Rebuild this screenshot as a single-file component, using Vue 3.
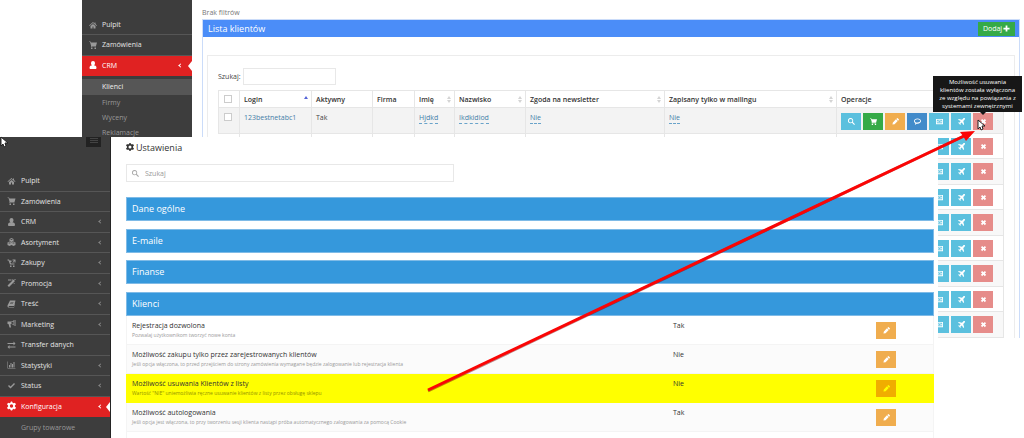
<script setup>
import { ref } from 'vue'

const icons = {
  home: 'M8 2 0 9l1 1 7-6 7 6 1-1-3-3V3h-2v2zM3 10v5h4v-4h2v4h4v-5L8 6z',
  cart: 'M0 1h3l1 2h12l-2 7H5v1h9v1H4V9L2 2H0zM4 13h3v3H4zM11 13h3v3h-3z',
  user: 'M8 0a4 4 0 0 1 4 4c0 2-1 4-2 5 3 0 5 1 5 5 0 1-1 2-2 2H3c-1 0-2-1-2-2 0-4 2-5 5-5-1-1-2-3-2-5a4 4 0 0 1 4-4z',
  cubes: 'M8 0l4 2v4l-4 2-4-2V2zM4 7l4 2v5l-4 2-4-2V9zM12 7l4 2v5l-4 2-4-2V9zM5 3l3 1 3-1-3-1zM1 10l3 1 3-1-3-1zM9 10l3 1 3-1-3-1z',
  basket: 'M0 1h3l1 2h4v3H6l1 3h7v2H5L2 3H0zM10 1h6v6h-2V4l-3 4-1-1 3-4h-3zM5 13h3v3H5zM11 13h3v3h-3z',
  wand: 'M12 1l3 3L3 16l-3-3zM1 1h7v2H1zM12 8h3v1h-3zM14 0h2v2h-2zM9 0h1v3H9z',
  book: 'M5 1h11l-3 11H3c-1 0-1 2 0 2h10l2-8v3l-2 6H2c-2 0-2-2-2-4zM6 4v1h6V4zM5 7v1h6V7z',
  horn: 'M0 3h6c3 0 5-1 7-3v11c-2-2-4-3-7-3l1 7H4L2 8H0zM12 3c-2 1-4 2-5 2v2c2 0 4 1 5 2zM14 0h2v12h-2z',
  swap: 'M0 4h12V1l4 4-4 4V6H0zM16 11H4V8l-4 4 4 4v-3h12z',
  chart: 'M0 1h1v13h15v1H0zM3 8h2v5H3zM6 4h2v9H6zM9 6h2v7H9zM12 2h2v11h-2z',
  check: 'M1 8l2-2 3 3 7-7 2 2-9 9z',
  gear: 'M7 0h2l1 2 2 1 2-1 2 3-2 2v2l2 2-2 3-2-1-2 1-1 2H7l-1-2-2-1-2 1-2-3 2-2V7L0 5l2-3 2 1 2-1zM8 5a3 3 0 1 0 0 6 3 3 0 0 0 0-6z',
  search: 'M6 0a6 6 0 0 1 5 9l5 5-2 2-5-5a6 6 0 1 1-3-11zM6 2a4 4 0 1 0 0 8 4 4 0 0 0 0-8z',
  pencil: 'M1 15l1-5 7-7 4 4-7 7zM10 2l2-2c1 0 4 3 4 4l-2 2z',
  chat: 'M8 1c5 0 8 3 8 6s-3 6-8 6H6l-4 3 1-4C1 11 0 9 0 7c0-3 3-6 8-6zM8 3C4 3 2 5 2 7c0 1 1 3 3 3v1l1-1h2c4 0 6-1 6-3S12 3 8 3z',
  money: 'M0 2h16v12H0zM2 4v8h12V4zM6 5h4v6H6zM3 6h2v4H3zM11 6h2v4h-2zM7 6v4h2V6z',
  plane: 'M15 0c2 1 1 3-1 5l-2 2 2 7-2 2-3-6-3 2v3l-1 1-2-3-3-2 1-1h3l2-3-6-3 2-2 7 2 2-2c2-2 3-3 4-2z',
  cross: 'M2 5l3-3 3 3 3-3 3 3-3 3 3 3-3 3-3-3-3 3-3-3 3-3z',
  plus: 'M6 1h4v5h5v4h-5v5H6v-5H1V6h5z',
}

const backMenu = [
  { label: 'Pulpit', icon: 'home' },
  { label: 'Zamówienia', icon: 'cart' },
  { label: 'CRM', icon: 'user', active: true, sub: true },
]
const backSub = ['Klienci', 'Firmy', 'Wyceny', 'Reklamacje']
const frontMenu = [
  { label: 'Pulpit', icon: 'home' },
  { label: 'Zamówienia', icon: 'cart' },
  { label: 'CRM', icon: 'user', sub: true },
  { label: 'Asortyment', icon: 'cubes', sub: true },
  { label: 'Zakupy', icon: 'basket', sub: true },
  { label: 'Promocja', icon: 'wand', sub: true },
  { label: 'Treść', icon: 'book', sub: true },
  { label: 'Marketing', icon: 'horn', sub: true },
  { label: 'Transfer danych', icon: 'swap' },
  { label: 'Statystyki', icon: 'chart', sub: true },
  { label: 'Status', icon: 'check', sub: true },
  { label: 'Konfiguracja', icon: 'gear', active: true, sub: true },
]
const operations = [
  { icon: 'search', tone: 'cyan', label: 'Podgląd' },
  { icon: 'cart', tone: 'green', label: 'Zamówienie' },
  { icon: 'pencil', tone: 'orange', label: 'Edytuj' },
  { icon: 'chat', tone: 'blue', label: 'Wiadomość' },
  { icon: 'money', tone: 'cyan', label: 'Płatności' },
  { icon: 'plane', tone: 'cyan', label: 'Wyślij' },
  { icon: 'cross', tone: 'red', label: 'Usuń' },
]
const sections = ['Dane ogólne', 'E-maile', 'Finanse', 'Klienci']
const settings = [
  { name: 'Rejestracja dozwolona', hint: 'Pozwalaj użytkownikom tworzyć nowe konta', value: 'Tak' },
  { name: 'Możliwość zakupu tylko przez zarejestrowanych klientów', hint: 'Jeśli opcja włączona, to przed przejściem do strony zamówienia wymagane będzie zalogowanie lub rejestracja klienta', value: 'Nie' },
  { name: 'Możliwość usuwania Klientów z listy', hint: 'Wartość "NIE" uniemożliwia ręczne usuwanie klientów z listy przez obsługę sklepu', value: 'Nie', marked: true },
  { name: 'Możliwość autologowania', hint: 'Jeśli opcja jest włączona, to przy tworzeniu sesji klienta nastąpi próba automatycznego zalogowania za pomocą Cookie', value: 'Tak' },
  { name: '', hint: '', value: '' },
]
const clientQuery = ref('')
const settingQuery = ref('')
</script>

<template>
  <div class="desktop">
    <section class="window back">
      <nav class="sidebar">
        <ul class="menu">
          <li v-for="m in backMenu" :key="m.label" :class="{ active: m.active }">
            <a href="#"><svg class="icon" viewBox="0 0 16 16"><path fill-rule="evenodd" :d="icons[m.icon]" /></svg>{{ m.label }}<span v-if="m.sub" class="chevron"></span></a>
          </li>
        </ul>
        <ul class="submenu">
          <li v-for="(s, i) in backSub" :key="s" :class="{ current: i === 0 }"><a href="#">{{ s }}</a></li>
        </ul>
      </nav>
      <main class="clients">
        <p class="filters">Brak filtrów</p>
        <div class="panel">
          <header class="panel-head">
            <h2>Lista klientów</h2>
            <button class="add">Dodaj <svg class="icon" viewBox="0 0 16 16"><path :d="icons.plus" /></svg></button>
          </header>
          <div class="card">
            <div class="search"><label for="client-search">Szukaj:</label><input id="client-search" v-model="clientQuery" type="text"></div>
            <table>
              <colgroup>
                <col class="c-check"><col class="c-login"><col class="c-active"><col class="c-firm"><col class="c-name"><col class="c-surname"><col class="c-news"><col><col class="c-ops">
              </colgroup>
              <thead>
                <tr>
                  <th><input type="checkbox" aria-label="Zaznacz wszystkie"></th>
                  <th>Login<i class="sort asc"></i></th>
                  <th>Aktywny</th>
                  <th>Firma</th>
                  <th>Imię<i class="sort"></i></th>
                  <th>Nazwisko<i class="sort"></i></th>
                  <th>Zgoda na newsletter<i class="sort"></i></th>
                  <th>Zapisany tylko w mailingu<i class="sort"></i></th>
                  <th>Operacje</th>
                </tr>
              </thead>
              <tbody>
                <tr v-for="n in 9" :key="n">
                  <td><input v-if="n === 1" type="checkbox" aria-label="Zaznacz klienta"></td>
                  <td><a v-if="n === 1" href="#">123bestnetabc1</a></td>
                  <td><span v-if="n === 1">Tak</span></td>
                  <td></td>
                  <td><a v-if="n === 1" href="#" class="editable">Hjdkd</a></td>
                  <td><a v-if="n === 1" href="#" class="editable">Ikdkidiod</a></td>
                  <td><a v-if="n === 1" href="#" class="editable">Nie</a></td>
                  <td><a v-if="n === 1" href="#" class="editable">Nie</a></td>
                  <td>
                    <div class="ops">
                      <button v-for="o in operations" :key="o.icon" :class="['square', o.tone]" :aria-label="o.label"><svg class="icon" viewBox="0 0 16 16"><path fill-rule="evenodd" :d="icons[o.icon]" /></svg></button>
                    </div>
                  </td>
                </tr>
              </tbody>
            </table>
          </div>
        </div>
      </main>
      <div class="tooltip" role="tooltip">Możliwość usuwania<br>klientów została wyłączona<br>ze względu na powiązania z<br>systemami zewnętrznymi</div>
    </section>

    <section class="window front">
      <nav class="sidebar">
        <button class="toggle" aria-label="Menu"><i></i><i></i><i></i></button>
        <ul class="menu">
          <li v-for="m in frontMenu" :key="m.label" :class="{ active: m.active }">
            <a href="#"><svg class="icon" viewBox="0 0 16 16"><path fill-rule="evenodd" :d="icons[m.icon]" /></svg>{{ m.label }}<span v-if="m.sub" class="chevron"></span></a>
          </li>
        </ul>
        <ul class="submenu"><li><a href="#">Grupy towarowe</a></li></ul>
      </nav>
      <main class="config">
        <h1><svg class="icon" viewBox="0 0 16 16"><path fill-rule="evenodd" :d="icons.gear" /></svg>Ustawienia</h1>
        <div class="find">
          <svg class="icon" viewBox="0 0 16 16"><path fill-rule="evenodd" :d="icons.search" /></svg>
          <input v-model="settingQuery" type="text" placeholder="Szukaj" aria-label="Szukaj">
        </div>
        <div class="sections">
          <h2 v-for="s in sections" :key="s" class="section">{{ s }}</h2>
        </div>
        <div class="settings">
          <div v-for="(s, i) in settings" :key="i" :class="['setting', { marked: s.marked }]">
            <div class="what"><strong>{{ s.name }}</strong><small>{{ s.hint }}</small></div>
            <span class="value">{{ s.value }}</span>
            <button class="square orange" aria-label="Edytuj"><svg class="icon" viewBox="0 0 16 16"><path :d="icons.pencil" /></svg></button>
          </div>
        </div>
      </main>
    </section>

    <svg class="arrow" viewBox="0 0 560 280">
      <path d="M1 270 537 15" stroke="#6b0000" stroke-opacity=".45" stroke-width="3" />
      <path d="M1 269 537 15" stroke="#fb0505" stroke-width="3" />
      <path d="M548 10 533 11 536 15 539 20z" fill="#fb0505" />
    </svg>
    <svg class="pointer hover" viewBox="0 0 8 12"><path d="M1 1v9l2-2 1 3 2-1-1-3h3z" fill="#fff" stroke="#222" stroke-width="1" /></svg>
    <svg class="pointer idle" viewBox="0 0 8 12"><path d="M1 1v9l2-2 1 3 2-1-1-3h3z" fill="#fff" stroke="#222" stroke-width="1" /></svg>
  </div>
</template>

<style>
body { margin: 0; background: #fff; }
</style>

<style scoped>
.desktop { position: relative; height: 100vh; min-height: 438px; overflow: hidden; font-family: "Open Sans", "Noto Sans", sans-serif; font-size: 7px; color: #444; }
.desktop * { box-sizing: border-box; }
ul, p, h1, h2 { margin: 0; padding: 0; font-weight: 400; list-style: none; }
a { color: inherit; text-decoration: none; }
button, input { font: inherit; margin: 0; padding: 0; border: 0; border-radius: 0; }
.icon { width: 8px; height: 8px; fill: currentColor; flex: none; }
.window { position: absolute; display: flex; background: #fff; overflow: hidden; }
.back { top: 0; left: 82px; right: 0; height: 338px; }
.front { top: 137px; left: 0; right: 86px; bottom: 0; }

.sidebar { flex: none; background: #3d3d3d; color: #e4e4e4; }
.back .sidebar { width: 110px; padding-top: 15px; }
.front .sidebar { width: 111px; display: flex; flex-direction: column; border-right: 1px solid #242424; }
.menu { display: flex; flex-direction: column; }
.back .menu { height: 61px; }
.front .menu { height: 246px; flex: none; margin-top: 24px; }
.menu li { flex: 1; border-bottom: 1px solid #565656; }
.menu a { position: relative; display: flex; align-items: center; gap: 5px; height: 100%; padding-left: 7px; }
.menu .icon { color: #999; }
.menu .active { background: #e02222; border-color: #e02222; color: #fff; }
.menu .active .icon { color: #fff; }
.front .menu .icon { width: 9px; }
.front .menu .active .icon { height: 10px; }
.chevron { width: 3px; height: 3px; margin: 0 10px 0 auto; border-left: 1px solid #888; border-bottom: 1px solid #888; transform: rotate(45deg); }
.front .chevron { margin-right: 8px; }
.active .chevron { border-color: #fff; }
.active a::after { content: ""; position: absolute; right: 0; top: 5px; border: 5px solid transparent; border-right: 4px solid #fff; border-left: 0; }
.submenu { padding-top: 3px; }
.submenu li { height: 16px; line-height: 16px; padding-left: 20px; color: #999; }
.front .submenu li { padding-left: 21px; }
.back .submenu li + li { height: 15px; }
.submenu .current { background: #565656; color: #eee; }
.toggle { align-self: flex-end; display: flex; flex-direction: column; align-items: center; gap: 1px; width: 15px; height: 10px; margin-right: 9px; padding-top: 1px; background: #222; }
.toggle i { width: 8px; height: 1px; background: #444; }

.clients { flex: 1; min-width: 0; padding: 7px 4px 0 10px; }
.filters { height: 12px; line-height: 12px; color: #777; }
.panel { border: 1px solid #cbdcf9; }
.panel-head { display: flex; align-items: center; justify-content: space-between; height: 17px; padding: 0 4px 0 5px; background: #4b8df8; color: #fff; }
.panel-head h2 { font-size: 9px; line-height: 16px; }
.add { display: flex; align-items: center; justify-content: center; gap: 1px; width: 37px; height: 14px; background: #35aa47; color: #fff; }
.add .icon { width: 7px; height: 7px; }
.card { margin: 18px 4px 0; padding: 12px 10px 20px; border: 1px solid #ececec; }
.search { display: flex; align-items: center; gap: 2px; height: 17px; margin-bottom: 5px; }
.search input { width: 93px; height: 17px; border: 1px solid #e8e8e8; }
table { width: 100%; border-collapse: collapse; table-layout: fixed; }
.c-check { width: 21px; }
.c-login { width: 72px; }
.c-active { width: 61px; }
.c-firm { width: 42px; }
.c-name { width: 40px; }
.c-surname { width: 71px; }
.c-news { width: 139px; }
.c-ops { width: 167px; }
th, td { border: 1px solid #e6e6e6; text-align: left; padding: 0 4px; }
th { position: relative; height: 17px; font-weight: 600; color: #333; white-space: nowrap; }
td { height: 26px; padding-top: 5px; vertical-align: top; line-height: 10px; }
tbody tr + tr td { padding-top: 4px; border-left: 0; }
tbody tr:nth-child(even) td { height: 25px; }
tbody tr:nth-child(odd) { background: #f8f8f8; }
tbody tr:first-child { background: #f3f3f3; }
td a { color: #447ea8; }
.editable { display: inline-block; border-bottom: 1px dashed #69a3ca; }
input[type="checkbox"] { appearance: none; display: block; width: 8px; height: 8px; margin: 0 1px; border: 1px solid #ccc; background: #fff; }
.sort { position: absolute; right: 3px; top: 5px; }
.sort::before, .sort::after { content: ""; display: block; border: 2px solid transparent; border-top: 0; border-bottom: 3px solid #d4d4d4; }
.sort::after { margin-top: 1px; transform: rotate(180deg); }
.asc::before { border-bottom-color: #5564d8; }
.asc::after { visibility: hidden; }
.ops { display: flex; gap: 2px; }
.square { display: flex; align-items: center; justify-content: center; flex: none; width: 20px; height: 17px; color: #fff; }
.square .icon { width: 7px; height: 7px; }
.cyan { background: #5bc0de; }
.green { background: #35aa47; }
.orange { background: #f0ad4e; }
.blue { background: #428bca; }
.red { background: #e68c8a; }
.tooltip { position: absolute; top: 76px; right: 2px; width: 89px; padding: 2px 0; background: #171717; color: #fff; font-size: 6px; line-height: 8px; text-align: center; white-space: nowrap; }
.tooltip::after { content: ""; position: absolute; top: 100%; left: 47px; border: 3px solid transparent; border-top-color: #171717; border-bottom: 0; }

.config { flex: 1; min-width: 0; padding: 2px 4px 0 15px; }
h1 { display: flex; align-items: center; gap: 2px; height: 16px; font-size: 9px; color: #333; }
.find { display: flex; align-items: center; gap: 6px; width: 40%; min-width: 328px; height: 18px; margin: 9px 0 15px; padding-left: 5px; border: 1px solid #e8e8e8; color: #aaa; }
.find .icon { width: 7px; height: 7px; }
.find input { flex: 1; background: none; outline: 0; color: #555; }
.find input::placeholder { color: #999; opacity: 1; }
.sections { display: flex; flex-direction: column; justify-content: space-between; height: 119px; }
.section { height: 24px; padding-left: 5px; border: 1px solid #7fbbe7; background: #3598dc; color: #fff; font-size: 9px; line-height: 22px; }
.setting { display: flex; align-items: center; height: 29px; padding: 0 37px 0 5px; border: 1px solid #f4f4f4; border-top: 0; }
.setting:nth-child(even) { background: #fbfbfb; }
.setting.marked { background: #ff0; border-color: #ff0; }
.what { flex: 1; min-width: 0; display: flex; flex-direction: column; white-space: nowrap; align-self: flex-start; padding-top: 4px; }
.what strong { height: 11px; line-height: 11px; font-weight: 400; color: #333; }
.what small { height: 8px; line-height: 8px; font-size: 5px; color: #999; }
.value { width: 203px; height: 21px; line-height: 11px; color: #333; }
.marked .what small { color: #929200; }
.marked .square { background: #f0ad00; color: #ff0; }

.arrow { position: absolute; top: 121px; left: 427px; width: 560px; height: 280px; fill: none; }
.pointer { position: absolute; width: 8px; height: 12px; }
.hover { top: 119px; left: 977px; }
.idle { top: 136px; left: 0; }
</style>
